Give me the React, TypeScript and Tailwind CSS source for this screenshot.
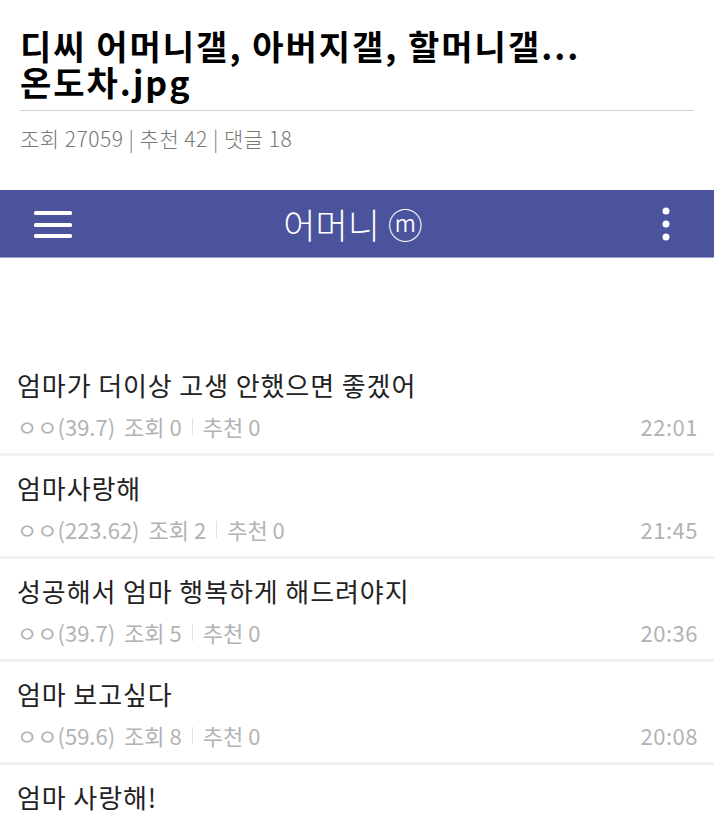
import React from "react";

const posts = [
  { title: "엄마가 더이상 고생 안했으면 좋겠어", ip: "39.7", views: 0, likes: 0, time: "22:01" },
  { title: "엄마사랑해", ip: "223.62", views: 2, likes: 0, time: "21:45" },
  { title: "성공해서 엄마 행복하게 해드려야지", ip: "39.7", views: 5, likes: 0, time: "20:36" },
  { title: "엄마 보고싶다", ip: "59.6", views: 8, likes: 0, time: "20:08" },
];

const font = "font-['Noto_Sans_CJK_KR','Noto_Sans',sans-serif]";

function PostRow({ post }: { post: (typeof posts)[number] }) {
  return (
    <div className="border-b-[3px] border-[#f2f2f2] px-[17px] pt-[15px] pb-[12px]">
      <div className="text-[26px] leading-[34px] tracking-[0.9px] text-[#222]">{post.title}</div>
      <div className="mt-[9px] flex items-center justify-between text-[22px] leading-[30px] text-[#b3b3b3]">
        <div className="flex items-center">
          <span>ㅇㅇ({post.ip})</span>
          <span className="ml-[9px]">조회 {post.views}</span>
          <span className="mx-[10px] h-[17px] w-px bg-[#e2e2e2]" />
          <span>추천 {post.likes}</span>
        </div>
        <span className="mr-[-1px] tracking-[0.5px]">{post.time}</span>
      </div>
    </div>
  );
}

export default function App() {
  return (
    <div className={`min-h-[817px] w-[714px] overflow-hidden bg-white ${font}`}>
      <div className="px-[20px] pt-[28px]">
        <h1 className="text-[34px] font-bold leading-[36px] tracking-[2px] text-black">
          <div>디씨 어머니갤, 아버지갤, 할머니갤...</div>
          <div>온도차.jpg</div>
        </h1>
        <div className="mt-[10px] border-t border-[#cfcfcf]" />
        <div className="mt-[13px] text-[21px] font-light leading-[28px] tracking-[0.5px] text-[#777]">
          조회 27059 | 추천 42 | 댓글 18
        </div>
      </div>

      <div className="mt-[38px]">
        <div className="grid h-[67px] grid-cols-[1fr_auto_1fr] items-center bg-[#4a539b] pl-[34px] pr-[42px]">
          <svg width="40" height="30" viewBox="0 0 40 30">
            <rect x="0" y="2" width="38" height="4" rx="1.5" fill="#fff" />
            <rect x="0" y="14" width="38" height="4" rx="1.5" fill="#fff" />
            <rect x="0" y="25" width="38" height="4" rx="1.5" fill="#fff" />
          </svg>
          <div className="text-[35px] font-light leading-none text-white">어머니 ⓜ</div>
          <svg className="justify-self-end" width="12" height="36" viewBox="0 0 12 36">
            <circle cx="6" cy="5" r="3.5" fill="#fff" />
            <circle cx="6" cy="18" r="3.5" fill="#fff" />
            <circle cx="6" cy="31" r="3.5" fill="#fff" />
          </svg>
        </div>
        <div className="h-px bg-[#9aa3d8]" />

        <div className="h-[95px]" />

        {posts.map((p) => (
          <PostRow key={p.time} post={p} />
        ))}
        <div className="px-[17px] pt-[15px]">
          <div className="text-[26px] leading-[34px] tracking-[0.9px] text-[#222]">엄마 사랑해!</div>
        </div>
      </div>
    </div>
  );
}
